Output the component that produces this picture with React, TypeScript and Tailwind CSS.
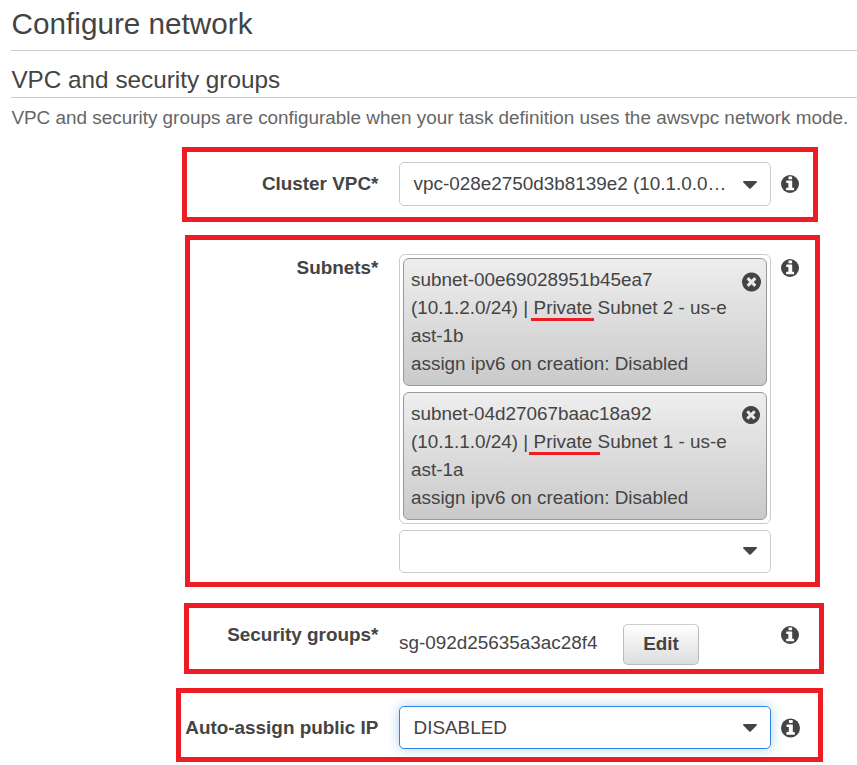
import type { ReactNode } from "react";

function InfoIcon({ className = "size-[18px]" }: { className?: string }) {
  return (
    <svg viewBox="0 0 18 18" className={`shrink-0 ${className}`}>
      <circle cx="9" cy="9" r="9" className="fill-[#444]" />
      <path
        className="fill-white"
        d="M7.9 1.4H10.7Q11.1 1.4 11.1 1.8V3.9Q11.1 4.3 10.7 4.3H7.9Q7.5 4.3 7.5 3.9V1.8Q7.5 1.4 7.9 1.4ZM5.6 5.6H10.8Q11.2 5.6 11.2 6V12.8H12.7Q13.1 12.8 13.1 13.2V14.9Q13.1 15.3 12.7 15.3H5.5Q5.1 15.3 5.1 14.9V13.2Q5.1 12.8 5.5 12.8H7.4V8H5.6Q5.2 8 5.2 7.6V6Q5.2 5.6 5.6 5.6Z"
      />
    </svg>
  );
}

function RemoveIcon({ className = "" }: { className?: string }) {
  return (
    <svg viewBox="128 128 1536 1536" className={`shrink-0 fill-[#444] ${className}`}>
      <path d="M1277 1122q0-26-19-45l-181-181 181-181q19-19 19-45 0-27-19-46l-90-90q-19-19-46-19-26 0-45 19l-181 181-181-181q-19-19-45-19-27 0-46 19l-90 90q-19 19-19 46 0 26 19 45l181 181-181 181q-19 19-19 45 0 27 19 46l90 90q19 19 46 19 26 0 45-19l181-181 181 181q19 19 45 19 27 0 46-19l90-90q19-19 19-46zm387-226q0 209-103 385.5t-279.5 279.5-385.5 103-385.5-103-279.5-279.5-103-385.5 103-385.5 279.5-279.5 385.5-103 385.5 103 279.5 279.5 103 385.5z" />
    </svg>
  );
}

function Caret({ className }: { className: string }) {
  return (
    <svg viewBox="0 0 14 8" className={`h-2 w-3.5 shrink-0 fill-[#444] ${className}`}>
      <path d="M1 0H13Q14 0 14 .7Q14 1 13.6 1.5L7.7 7.4Q7 8 6.3 7.4L.4 1.5Q0 1 0 .7Q0 0 1 0Z" />
    </svg>
  );
}

function Highlight({ className, children }: { className: string; children: ReactNode }) {
  return <section className={`flex items-start border-[5px] border-[#ee1c24] ${className}`}>{children}</section>;
}

function Label({ className, children }: { className: string; children: ReactNode }) {
  return <div className={`mr-5 shrink-0 pr-[0.6px] text-right font-bold whitespace-nowrap ${className}`}>{children}</div>;
}

function Select({ className, caret, children }: { className: string; caret: string; children?: ReactNode }) {
  return (
    <div className={`flex w-[372px] items-start justify-between rounded-[5px] border bg-white pr-[13px] pl-[13.5px] ${className}`}>
      <span>{children}</span>
      <Caret className={caret} />
    </div>
  );
}

type SubnetProps = {
  id: string;
  cidr: string;
  rest: string;
  zone: string;
  underline: string;
  remove: string;
};

function Subnet({ id, cidr, rest, zone, underline, remove }: SubnetProps) {
  return (
    <div className="flex h-32 items-start justify-between rounded-[6px] border border-[#999] bg-linear-to-b from-[#eee] to-[#cacaca] pt-[7px] pl-[7px] whitespace-nowrap">
      <div>
        <div>{id}</div>
        <div>
          {cidr} |{" "}
          <span className="relative">
            Private
            <span className={`absolute h-[3px] bg-[#ee1c24] ${underline}`} />
          </span>{" "}
          {rest}
        </div>
        <div>{zone}</div>
        <div>assign ipv6 on creation: Disabled</div>
      </div>
      <RemoveIcon className={remove} />
    </div>
  );
}

export default function App() {
  return (
    <main className="h-[765px] w-[857px] overflow-hidden bg-white font-['Liberation_Sans',Arial,sans-serif] text-[18.9px] leading-7 text-[#444]">
      <header className="pl-[11px] whitespace-nowrap">
        <h1 className="h-[51px] border-b border-[#ccc] pt-1 pl-[0.6px] text-[29.7px] leading-10">Configure network</h1>
        <h2 className="h-[47px] border-b border-[#ccc] pt-[13px] pl-[0.4px] text-[24.3px] leading-8">VPC and security groups</h2>
        <p className="h-[49px] pt-[6px] pl-[0.4px] text-[#666]">
          VPC and security groups are configurable when your task definition uses the awsvpc network mode.
        </p>
      </header>

      <Highlight className="ml-[182px] h-[75px] w-[636px] pt-[10px]">
        <Label className="w-48 pt-[8px]">Cluster VPC*</Label>
        <Select className="h-11 border-[#ccc] pt-[7px]" caret="mt-[11px]">
          vpc-028e2750d3b8139e2 (10.1.0.0…
        </Select>
        <InfoIcon className="mt-[13px] ml-2.5 size-[18px]" />
      </Highlight>

      <Highlight className="mt-[13px] ml-[185px] h-[352px] w-[635px] pt-[14px]">
        <Label className="w-[189px]">Subnets*</Label>
        <div className="flex w-[372px] flex-col gap-1.5">
          <div className="flex h-[270px] flex-col gap-1.5 rounded-[6px] border border-[#ccc] p-[3px]">
            <Subnet
              id="subnet-00e69028951b45ea7"
              cidr="(10.1.2.0/24)"
              rest="Subnet 2 - us-e"
              zone="ast-1b"
              underline="-left-[3px] top-[21px] w-[63px]"
              remove="mt-[6px] mr-[5px] h-5 w-[19px]"
            />
            <Subnet
              id="subnet-04d27067baac18a92"
              cidr="(10.1.1.0/24)"
              rest="Subnet 1 - us-e"
              zone="ast-1a"
              underline="-left-[5px] top-[21px] w-[71px]"
              remove="mt-[6px] mr-[6px] size-[18px]"
            />
          </div>
          <Select className="h-[43px] border-[#ccc] pt-[6px]" caret="mt-[10px]" />
        </div>
        <InfoIcon className="mt-[5px] ml-2.5 size-[18px]" />
      </Highlight>

      <Highlight className="mt-4 ml-[184px] h-[71px] w-[640px]">
        <Label className="mt-[13px] w-[190px]">Security groups*</Label>
        <div className="mt-4 flex w-[372px] items-start">
          <span className="mt-[5px] w-56">sg-092d25635a3ac28f4</span>
          <button className="h-[41px] w-[76px] rounded-[5px] border border-[#bbb] border-t-[#ccc] bg-linear-to-b from-white to-[#ddd] pb-px font-bold">
            Edit
          </button>
        </div>
        <InfoIcon className="mt-[18px] ml-2.5 size-[18px]" />
      </Highlight>

      <Highlight className="mt-[14px] ml-[176px] h-[74px] w-[647px] pt-[13px]">
        <Label className="w-[198px] pt-[8px]">Auto-assign public IP</Label>
        <Select
          className="h-[43px] border-[#2e86de] pt-[7px] shadow-[0_0_12px_rgba(46,134,222,0.4)]"
          caret="mt-[10px]"
        >
          DISABLED
        </Select>
        <InfoIcon className="mt-[12px] ml-2.5 h-5 w-[19px]" />
      </Highlight>
    </main>
  );
}
